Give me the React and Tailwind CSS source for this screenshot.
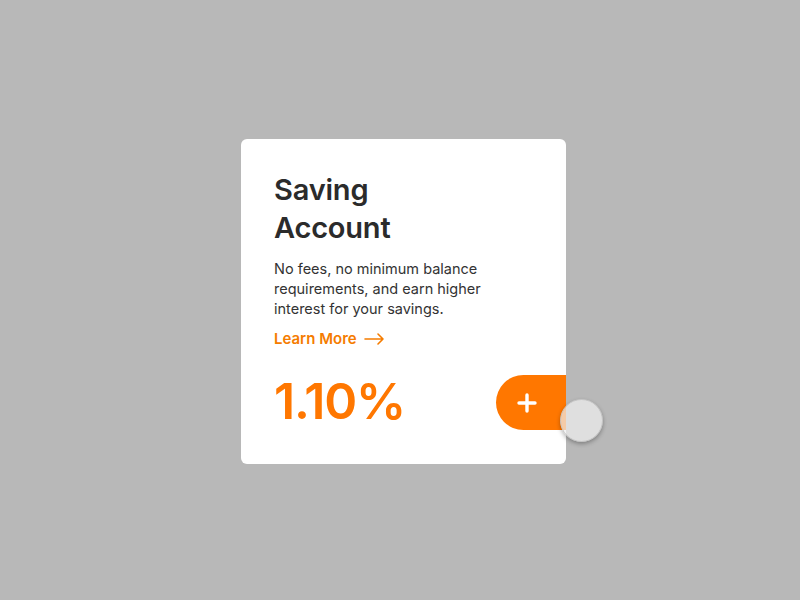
import React from 'react';

const App = () => {
  return (
    <div className="w-[800px] h-[600px] bg-[#b8b8b8] flex items-center justify-center" style={{ fontFamily: 'Inter, "Noto Sans", sans-serif' }}>
      <div className="relative w-[325px] h-[325px] ml-[7px] mt-[3px] bg-white rounded-[6px] pl-[33px] pt-[32px]">
        <h1 className="text-[29px] leading-[38px] font-semibold text-[#2b2b2b] tracking-[-0.2px]">
          Saving
          <br />
          Account
        </h1>
        <p className="mt-[12px] w-[230px] text-[14.5px] leading-[20px] text-[#333333]">
          No fees, no minimum balance requirements, and earn higher interest for your savings.
        </p>
        <a href="#" className="mt-[9px] flex items-center gap-[7px] text-[15px] font-semibold text-[#f57c00]">
          Learn More
          <svg width="21" height="12" viewBox="0 0 21 12" fill="none" stroke="currentColor" strokeWidth="1.6" strokeLinecap="round" strokeLinejoin="round">
            <path d="M1 6h18M14 1l5 5-5 5" />
          </svg>
        </a>
        <div className="mt-[25px] text-[50px] leading-[50px] font-semibold text-[#ff7700] tracking-[-1.2px]">
          1.10%
        </div>

        {/* Add button */}
        <button className="absolute right-0 top-[236px] w-[70px] h-[55px] bg-[#ff7700] rounded-l-full flex items-center pl-[21px]">
          <svg width="20" height="20" viewBox="0 0 20 20" stroke="white" strokeWidth="3.4" strokeLinecap="round">
            <path d="M10 2v16M2 10h16" />
          </svg>
        </button>

        {/* Cursor */}
        <div className="absolute left-[319px] top-[260px] w-[43px] h-[43px] rounded-full bg-[#f0f0f0]/70 border border-[#c4c4c4] shadow-[0_2px_4px_rgba(0,0,0,0.3)]" />
      </div>
    </div>
  );
};

export default App;
